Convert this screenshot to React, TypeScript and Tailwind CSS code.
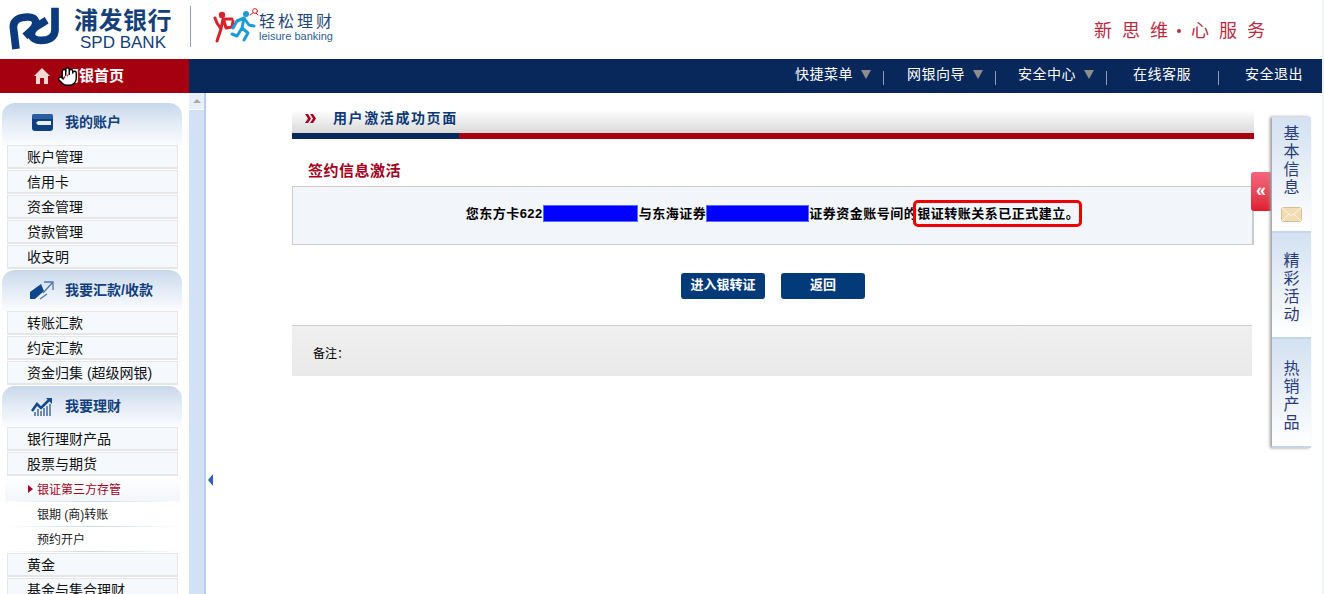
import React from "react";
import { Hand } from "lucide-react";

const cjk = { fontFamily: '"Liberation Sans","Noto Sans CJK SC",sans-serif' };

function SpdLogo() {
  return (
    <svg width="65" height="52" viewBox="0 0 195 156" fill="none">
      <path d="M33 138 L25 72 C25 50 45 42 68 42 C95 42 100 62 80 82 L60 100" stroke="#0b3b7c" strokeWidth="23" />
      <path d="M150 14 L150 80 C150 104 130 112 108 112 C78 112 70 92 92 72 L125 52" stroke="#0b3b7c" strokeWidth="23" />
    </svg>
  );
}

function Runners() {
  return (
    <svg width="56" height="40" viewBox="0 0 56 40" fill="none" strokeLinecap="round" strokeLinejoin="round">
      <circle cx="11" cy="8" r="3.2" fill="#d8232a" />
      <path d="M6 34 L10 22 L12 12 L21 12 M13 14 L15 21 L21 20 L22 14 M10 22 L6 16 L4 11" stroke="#d8232a" strokeWidth="3" />
      <circle cx="35" cy="7" r="3" fill="#1c9bd8" />
      <path d="M22 21 L26 14 L33 11 L38 18 L43 19 M33 11 L31 21 L37 26 L33 33 M31 21 L26 29 L21 27" stroke="#1c9bd8" strokeWidth="3" />
      <circle cx="44" cy="4" r="2.4" stroke="#d8232a" strokeWidth="1" />
      <path d="M39 8 L42 6 M47 8 L45 6" stroke="#d8232a" strokeWidth="1" />
    </svg>
  );
}

function CardIcon() {
  return (
    <svg width="21" height="17" viewBox="0 0 21 17">
      <rect width="21" height="17" rx="3" fill="#0f3f7f" />
      <rect y="0" width="21" height="5" rx="2" fill="#2c5f9e" />
      <path d="M6 7 H19 V11 H6 L4 9 Z" fill="#e6edf6" />
    </svg>
  );
}

function TransferIcon() {
  return (
    <svg width="24" height="19" viewBox="0 0 24 19" fill="none">
      <path d="M0 11 L11 3 L14 10 L5 18 L0 18 Z" fill="#12468a" />
      <path d="M14 1 H23 V9 M23 1 L13 12 M17 13 L10 18" stroke="#4f77ab" strokeWidth="1.3" />
    </svg>
  );
}

function ChartIcon() {
  return (
    <svg width="22" height="20" viewBox="0 0 22 20" fill="none">
      <path d="M1 14 L6 7 L10 11 L19 2" stroke="#174a88" strokeWidth="2.6" />
      <path d="M15 1 H21 V7 Z" fill="#174a88" />
      <path d="M4 19 V15 M7 19 V12 M10 19 V14 M13 19 V11 M16 19 V9 M19 19 V7" stroke="#53749f" strokeWidth="1.6" />
    </svg>
  );
}

function SideHead({ icon, label, first }: { icon: React.ReactNode; label: string; first?: boolean }) {
  return (
    <div
      className={
        "ml-[2px] w-[180px] rounded-t-[13px] bg-gradient-to-b from-[#c8d8eb] via-[#e4ecf6] to-[#fbfcfe] flex items-center " +
        (first ? "h-[42px] pb-[3px]" : "h-[41px] mt-[1px]")
      }
    >
      <div className="w-[63px] flex justify-center pl-[17px]">{icon}</div>
      <span className="text-[14px] font-bold text-[#123f7c] whitespace-nowrap">{label}</span>
    </div>
  );
}

function SideItem({ label }: { label: string }) {
  return (
    <div className="ml-[7px] w-[171px] h-[24px] mb-[1px] bg-[#f5f8fc] border border-[#e6e6e6] border-b-2 pl-[19px] pt-[1px] flex items-center text-[14px] text-[#111] whitespace-nowrap">
      {label}
    </div>
  );
}

function SubItem({ label, active }: { label: string; active?: boolean }) {
  return (
    <div
      className={
        "ml-[5px] w-[175px] h-[25px] border-b [border-image:linear-gradient(to_right,#ffffff,#c9dbe4,#ffffff)_1] pl-[32px] pt-[1px] flex items-center relative text-[12px] whitespace-nowrap " +
        (active ? "text-[#a50021] bg-gradient-to-b from-white to-[#f3f6fa]" : "text-[#222]")
      }
    >
      {active && (
        <span className="absolute left-[23px] top-[8px] w-0 h-0 border-y-[4px] border-y-transparent border-l-[5px] border-l-[#a50021]" />
      )}
      {label}
    </div>
  );
}

function NavLink({ label, arrow, sep, ml }: { label: string; arrow?: boolean; sep?: boolean; ml?: string }) {
  return (
    <div className={"flex items-center " + (ml ?? "")}>
      <span className="text-[14px] tracking-[0.5px] text-white leading-none w-[58px] whitespace-nowrap">{label}</span>
      {arrow && (
        <span className="ml-[8px] w-0 h-0 border-x-[5px] border-x-transparent border-t-[9px] border-t-[#8d8d8d]" />
      )}
      {sep && <span className={(arrow ? "ml-[12px]" : "ml-[27px]") + " w-px h-[14px] mt-[8px] bg-[#8f9bb0]"} />}
    </div>
  );
}

function SideTab({ chars, h, pt, children }: { chars: string[]; h: string; pt: string; children?: React.ReactNode }) {
  return (
    <div className={"flex flex-col items-center bg-gradient-to-b from-[#d3e1f1] to-white border-b-2 border-[#c6d6ea] " + h + " " + pt}>
      {chars.map((c) => (
        <span key={c} className="text-[16px] leading-[18px] text-[#2a3c78]">{c}</span>
      ))}
      {children}
    </div>
  );
}

export default function App() {
  return (
    <div className="w-[1324px] h-[594px] overflow-hidden bg-white flex flex-col relative" style={cjk}>
      <header className="h-[59px] shrink-0 flex items-start pl-[5px]">
        <div className="mt-[3px]"><SpdLogo /></div>
        <div className="ml-[6px] mt-[7px] flex flex-col items-center w-[94px]">
          <span className="text-[24px] leading-[27px] font-bold tracking-[0.5px] text-[#153f78] whitespace-nowrap">浦发银行</span>
          <span className="text-[17px] leading-[17px] text-[#153f78] whitespace-nowrap">SPD BANK</span>
        </div>
        <div className="ml-[20px] mt-[6px] w-px h-[41px] bg-[#8aa3c4]" />
        <div className="ml-[20px] mt-[7px]"><Runners /></div>
        <div className="-ml-[8px] mt-[13px] flex flex-col w-[74px]">
          <span className="text-[16px] leading-[18px] tracking-[3px] text-[#1f4678] whitespace-nowrap">轻松理财</span>
          <span className="text-[11px] leading-[11px] text-[#2f5f8f] whitespace-nowrap">leisure banking</span>
        </div>
        <div className="ml-auto mr-[49px] mt-[20px] flex items-center text-[18px] leading-[22px] text-[#b92b42] whitespace-nowrap">
          <span className="tracking-[10px]">新思维</span>
          <span className="w-[4px] h-[4px] rounded-full bg-[#b92b42] mr-[10px] -ml-[1px]" />
          <span className="tracking-[10px]">心服务</span>
        </div>
      </header>

      <nav className="h-[34px] shrink-0 bg-[#08275a] flex mr-[2px]">
        <div className="w-[189px] bg-[#a50010] flex items-center pl-[34px] relative">
          <svg width="16" height="16" viewBox="0 0 16 16" fill="#f4d9d2">
            <path d="M8 0 L16 8 H14 V16 H10 V10 H6 V16 H2 V8 H0 Z" />
          </svg>
          <span className="ml-[14px] text-[15px] font-bold text-white whitespace-nowrap">网银首页</span>
          <Hand className="absolute left-[57px] top-[7px]" size={21} fill="#ffffff" stroke="#000000" strokeWidth={1.6} />
        </div>
        <div className="flex-1 flex items-center justify-end pr-[19px] pb-[4px]">
          <NavLink label="快捷菜单" arrow sep />
          <NavLink label="网银向导" arrow sep ml="ml-[23px]" />
          <NavLink label="安全中心" arrow sep ml="ml-[22px]" />
          <NavLink label="在线客服" sep ml="ml-[26px]" />
          <NavLink label="安全退出" ml="ml-[26px]" />
        </div>
      </nav>

      <div className="flex-1 flex min-h-0">
        <aside className="w-[189px] shrink-0 pt-[10px] overflow-hidden">
          <SideHead icon={<CardIcon />} label="我的账户" first />
          <SideItem label="账户管理" />
          <SideItem label="信用卡" />
          <SideItem label="资金管理" />
          <SideItem label="贷款管理" />
          <SideItem label="收支明" />
          <SideHead icon={<TransferIcon />} label="我要汇款/收款" />
          <SideItem label="转账汇款" />
          <SideItem label="约定汇款" />
          <SideItem label="资金归集 (超级网银)" />
          <SideHead icon={<ChartIcon />} label="我要理财" />
          <SideItem label="银行理财产品" />
          <SideItem label="股票与期货" />
          <SubItem label="银证第三方存管" active />
          <SubItem label="银期 (商)转账" />
          <SubItem label="预约开户" />
          <div className="h-[1px]" />
          <SideItem label="黄金" />
          <SideItem label="基金与集合理财" />
        </aside>

        <div className="w-[17px] shrink-0 bg-[#d2e1f6] border-r-2 border-[#b8cdf2] relative">
          <div className="h-[17px] w-[15px] bg-[#e7eff9] border-b border-white flex items-center justify-center">
            <span className="w-0 h-0 border-x-[4px] border-x-transparent border-b-[4px] border-b-[#a9a9a9]" />
          </div>
        </div>

        <main className="flex-1 relative pl-[86px] pt-[17px] pr-[70px]">
          <span className="absolute left-[2px] top-[381px] w-0 h-0 border-y-[6px] border-y-transparent border-r-[5px] border-r-[#2a62b0]" />

          <div className="h-[23px] bg-gradient-to-b from-white to-[#d9d9d9] flex items-center pl-[13px] pb-[6px]">
            <svg width="11" height="9" viewBox="0 0 11 9" fill="#a50021">
              <path d="M0 0 H3 L6 4.5 L3 9 H0 L3 4.5 Z M5 0 H8 L11 4.5 L8 9 H5 L8 4.5 Z" />
            </svg>
            <span className="ml-[17px] text-[14px] font-bold tracking-[1.6px] text-[#0b3a75] whitespace-nowrap">用户激活成功页面</span>
          </div>
          <div className="h-[6px] flex">
            <div className="w-[167px] bg-[#08275a]" />
            <div className="flex-1 bg-[#a50014]" />
          </div>

          <h2 className="mt-[22px] ml-[16px] h-[19px] leading-[19px] text-[15px] tracking-[0.5px] font-bold text-[#a50021]">签约信息激活</h2>

          <div className="mt-[6px] h-[59px] bg-[#f2f5fa] border border-[#cccccc] border-r-2 flex items-center justify-center pb-[5px]">
            <p className="text-[13px] leading-[17px] font-bold text-black tracking-[0.5px] whitespace-nowrap flex items-center">
              <span>您东方卡622</span>
              <span className="inline-block w-[95px] h-[17px] bg-[#0000ff] border border-[#5a6cff]" />
              <span className="ml-[1px]">与东海证券</span>
              <span className="inline-block w-[103px] h-[17px] bg-[#0000ff] border border-[#5a6cff]" />
              <span>证券资金账号间的</span>
              <span className="relative">
                银证转账关系已正式建立。
                <span className="absolute -left-[4px] -top-[5px] w-[169px] h-[27px] rounded-[5px] border-[3px] border-[#ee0000]" />
              </span>
            </p>
          </div>

          <div className="mt-[28px] flex justify-center gap-[16px]">
            <button className="w-[84px] h-[26px] rounded-[3px] bg-[#023a7a] text-white text-[13px] font-bold pb-[2px]">进入银转证</button>
            <button className="w-[84px] h-[26px] rounded-[3px] bg-[#023a7a] text-white text-[13px] font-bold pb-[2px]">返回</button>
          </div>

          <div className="mt-[26px] mr-[2px] h-[51px] border-t border-[#cccccc] bg-gradient-to-b from-[#f0f0f0] to-[#e9e9e9] pl-[21px] pt-[20px] text-[12px] leading-[16px] text-black">
            备注：
          </div>
        </main>
      </div>

      <div className="absolute right-0 top-0 w-[2px] h-full bg-[#eef2fa]" />

      <div className="absolute left-[1251px] top-[172px] w-[20px] h-[39px] rounded-l-[3px] bg-gradient-to-b from-[#f4667e] to-[#e01a30] flex items-center justify-center text-white text-[18px] font-bold leading-none pb-[3px]">
        «
      </div>

      <div className="absolute left-[1272px] top-[117px] w-[39px] shadow-[-2px_0_3px_#9a9a9a]">
        <SideTab chars={["基", "本", "信", "息"]} h="h-[116px]" pt="pt-[8px]">
          <svg className="mt-[10px]" width="21" height="15" viewBox="0 0 21 15">
            <rect x="0.5" y="0.5" width="20" height="14" rx="2" fill="#f2dcb4" stroke="#d8be92" />
            <path d="M1 1 L10.5 9 L20 1 M1 14 L8 7 M20 14 L13 7" fill="none" stroke="#fff4e0" />
          </svg>
        </SideTab>
        <SideTab chars={["精", "彩", "活", "动"]} h="h-[106px]" pt="pt-[19px]" />
        <SideTab chars={["热", "销", "产", "品"]} h="h-[109px]" pt="pt-[21px]" />
      </div>
    </div>
  );
}
